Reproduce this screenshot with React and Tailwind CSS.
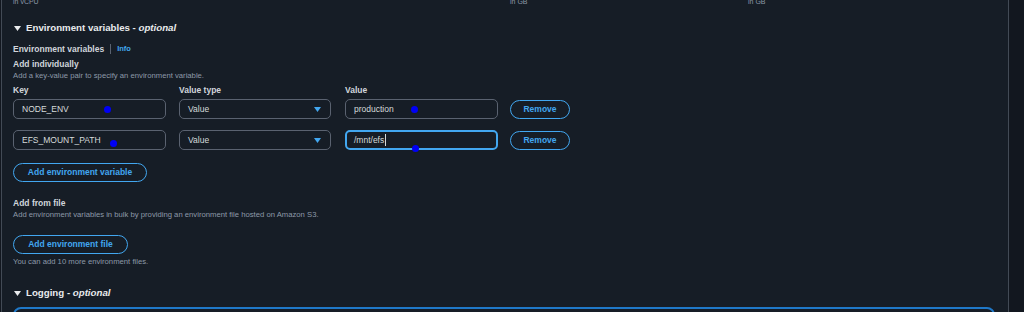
import React from "react";

const FONT = { fontFamily: '"Liberation Sans", Arial, sans-serif' };

function TextInput({ value, dotLeft, dotTop, focused, cursor }) {
  return (
    <div
      className={
        "relative w-[153px] h-[20px] rounded-[5px] flex items-center text-[8.5px] text-[#d5dbdb] " +
        (focused ? "border-2 border-[#42a7f0] pl-[7px]" : "border border-[#5a6270] pl-[8px]")
      }
    >
      <span>{value}</span>
      {cursor && <span className="w-px h-[12px] bg-[#d5dbdb] ml-[1px]" />}
      <span
        className="absolute w-[7px] h-[7px] rounded-full bg-[#0000f5]"
        style={{ left: dotLeft, top: dotTop }}
      />
    </div>
  );
}

function Select() {
  return (
    <div className="relative w-[152px] h-[20px] rounded-[5px] border border-[#5a6270] flex items-center justify-between pl-[8px] pr-[9px] text-[8.5px] text-[#d5dbdb]">
      <span>Value</span>
      <svg width="7" height="5" viewBox="0 0 7 5">
        <path d="M0 0 L7 0 L3.5 5 Z" fill="#42a7f0" />
      </svg>
    </div>
  );
}

function PillButton({ children, w }) {
  return (
    <div
      className={
        "h-[19px] rounded-full border border-[#42a7f0] flex items-center justify-center text-[8.5px] font-bold text-[#42a7f0] " +
        w
      }
    >
      {children}
    </div>
  );
}

function SectionHeading({ title }) {
  return (
    <div className="h-[14px] flex items-center pl-[1px] text-[9.7px] font-bold text-[#e9ebed]">
      <svg width="7" height="5" viewBox="0 0 7 5" className="mr-[5px]">
        <path d="M0 0 L7 0 L3.5 5 Z" fill="#e9ebed" />
      </svg>
      <span>
        {title} - <i>optional</i>
      </span>
    </div>
  );
}

export default function App() {
  return (
    <div className="w-[1024px] h-[312px] overflow-hidden bg-[#12171f] flex" style={FONT}>
      <div className="ml-[1px] w-[1008px] h-full bg-[#161d26] border-l border-r border-[#424a55] pl-[11px] pr-[13px] flex flex-col">
        {/* row continuing from above, cut by the top edge */}
        <div className="-mt-[2px] h-[8px] flex text-[7px] leading-[8px] text-[#8d99a8]">
          <span className="w-[497px]">in vCPU</span>
          <span className="w-[238px]">in GB</span>
          <span>in GB</span>
        </div>

        <div className="mt-[15px]">
          <SectionHeading title="Environment variables" />
        </div>
        <div className="mt-[1px] h-[2px] bg-[#2f3742]" />

        <div className="mt-[7px] h-[12px] flex items-center text-[8.5px] font-bold text-[#d1d5db]">
          <span>Environment variables</span>
          <span className="mx-[6px] w-px h-[10px] bg-[#5a6270]" />
          <span className="text-[#42a7f0] text-[7.5px]">Info</span>
        </div>
        <div className="mt-[3px] h-[12px] flex items-center text-[8.5px] font-bold text-[#d1d5db]">
          Add individually
        </div>
        <div className="mt-[1px] h-[10px] flex items-center text-[7.7px] text-[#8d99a8]">
          Add a key-value pair to specify an environment variable.
        </div>

        <div className="mt-[4px] h-[10px] flex items-center text-[8.5px] font-bold text-[#d1d5db]">
          <span className="w-[166px]">Key</span>
          <span className="w-[166px]">Value type</span>
          <span>Value</span>
        </div>

        <div className="mt-[4px] flex items-center">
          <TextInput value="NODE_ENV" dotLeft={90} dotTop={6} />
          <div className="ml-[13px]">
            <Select />
          </div>
          <div className="ml-[14px]">
            <TextInput value="production" dotLeft={65} dotTop={6} />
          </div>
          <div className="ml-[12px]">
            <PillButton w="w-[60px]">Remove</PillButton>
          </div>
        </div>

        <div className="mt-[11px] flex items-center">
          <TextInput value="EFS_MOUNT_PATH" dotLeft={96} dotTop={9} />
          <div className="ml-[13px]">
            <Select />
          </div>
          <div className="ml-[14px]">
            <TextInput value="/mnt/efs" dotLeft={65} dotTop={13} focused cursor />
          </div>
          <div className="ml-[12px]">
            <PillButton w="w-[60px]">Remove</PillButton>
          </div>
        </div>

        <div className="mt-[13px]">
          <PillButton w="w-[134px]">Add environment variable</PillButton>
        </div>

        <div className="mt-[15px] h-[12px] flex items-center text-[8.5px] font-bold text-[#d1d5db]">
          Add from file
        </div>
        <div className="mt-[1px] h-[10px] flex items-center text-[7.7px] text-[#8d99a8]">
          Add environment variables in bulk by providing an environment file hosted on Amazon S3.
        </div>
        <div className="mt-[15px]">
          <PillButton w="w-[115px]">Add environment file</PillButton>
        </div>
        <div className="mt-[3px] h-[10px] flex items-center text-[7.7px] text-[#8d99a8]">
          You can add 10 more environment files.
        </div>

        <div className="mt-[19px]">
          <SectionHeading title="Logging" />
        </div>
        <div className="mt-[1px] h-[2px] bg-[#2f3742]" />
        <div className="mt-[6px] h-[30px] shrink-0 rounded-[8px] border-2 border-[#1f78c8]" />
      </div>
    </div>
  );
}
